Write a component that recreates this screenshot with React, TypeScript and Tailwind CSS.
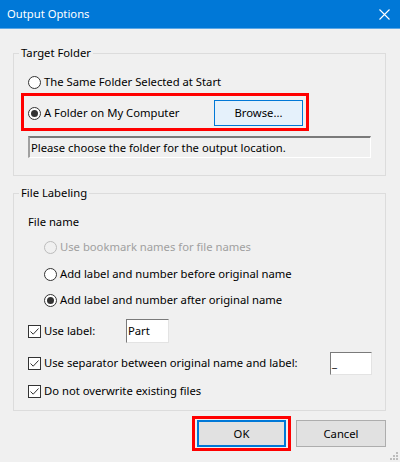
import React from "react";

function Radio({ checked, disabled }: { checked?: boolean; disabled?: boolean }) {
  return (
    <span
      className={
        "w-[13px] h-[13px] rounded-full border flex items-center justify-center shrink-0 " +
        (disabled ? "border-[#bcbcbc] bg-[#f0f0f0]" : "border-[#333333] bg-white")
      }
    >
      {checked && <span className="w-[7px] h-[7px] rounded-full bg-[#333333]" />}
    </span>
  );
}

function Check() {
  return (
    <span className="w-[13px] h-[13px] border border-[#333333] bg-white flex items-center justify-center shrink-0">
      <svg width="11" height="11" viewBox="0 0 11 11">
        <path d="M1.5 5.5 L4.2 8.2 L9.5 2.5" fill="none" stroke="#333333" strokeWidth="1" />
      </svg>
    </span>
  );
}

function RadioRow({ label, checked, disabled }: { label: string; checked?: boolean; disabled?: boolean }) {
  return (
    <div className="flex items-center h-[16px]">
      <Radio checked={checked} disabled={disabled} />
      <span className={"ml-[3px] " + (disabled ? "text-[#a0a0a0]" : "")}>{label}</span>
    </div>
  );
}

export default function App() {
  return (
    <div className="w-[400px] h-[462px] bg-[#f0f0f0] flex flex-col relative overflow-hidden text-[11.25px] leading-[16px] text-black font-['Segoe_UI','Noto_Sans',sans-serif]">
      {/* title bar */}
      <div className="h-[29px] bg-[#0078d7] border-b border-[#5aa7e6] flex items-center justify-between pl-[7px] pr-[10px] text-white shrink-0">
        <span>Output Options</span>
        <svg width="11" height="11" viewBox="0 0 11 11">
          <path d="M0.5 0.5 L10.5 10.5 M10.5 0.5 L0.5 10.5" stroke="#ffffff" strokeWidth="1.1" />
        </svg>
      </div>

      <div className="pl-[13px] pr-[14px]">
        {/* Target Folder */}
        <fieldset className="mt-[16px] border border-[#dcdcdc] pb-[17px]">
          <legend className="ml-[5px] px-[2px] leading-[16px]">Target Folder</legend>
          <div className="pt-[13px] pl-[14px]">
            <RadioRow label="The Same Folder Selected at Start" />
          </div>
          <div className="mt-[3px] ml-[7px] w-[288px] h-[38px] border-[3px] border-[#ff0000] flex items-center pl-[4px] pr-[3px] pt-[2px]">
            <Radio checked />
            <span className="ml-[3px]">A Folder on My Computer</span>
            <button className="ml-auto w-[89px] h-[26px] bg-[#e5f1fb] border border-[#0078d7] text-black">
              Browse...
            </button>
          </div>
          <div className="mt-[5px] ml-[14px] w-[343px] h-[22px] border-t-2 border-l-2 border-r border-b border-t-[#7a7a7a] border-l-[#a0a0a0] border-r-white border-b-white flex items-center pl-[1px]">
            Please choose the folder for the output location.
          </div>
        </fieldset>

        {/* File Labeling */}
        <fieldset className="mt-[9px] border border-[#dcdcdc] pb-[11px]">
          <legend className="ml-[5px] px-[2px] leading-[16px]">File Labeling</legend>
          <div className="pt-[13px] pl-[14px]">File name</div>
          <div className="pl-[30px] flex flex-col">
            <div className="mt-[9px]">
              <RadioRow label="Use bookmark names for file names" disabled />
            </div>
            <div className="mt-[11px]">
              <RadioRow label="Add label and number before original name" />
            </div>
            <div className="mt-[10px]">
              <RadioRow label="Add label and number after original name" checked />
            </div>
          </div>
          <div className="pl-[14px] flex flex-col">
            <div className="mt-[11px] h-[24px] flex items-center">
              <Check />
              <span className="ml-[3px] w-[82px]">Use label:</span>
              <div className="w-[43px] h-[24px] bg-white border border-t-[#7a7a7a] border-l-[#7a7a7a] border-r-[#e3e3e3] border-b-[#e3e3e3] flex items-center pl-[1px]">
                Part
              </div>
            </div>
            <div className="mt-[8px] h-[24px] flex items-center">
              <Check />
              <span className="ml-[3px]">Use separator between original name and label:</span>
              <div className="ml-auto mr-[13px] w-[42px] h-[23px] bg-white border border-t-[#7a7a7a] border-l-[#7a7a7a] border-r-[#e3e3e3] border-b-[#e3e3e3] flex items-center pl-[1px]">
                _
              </div>
            </div>
            <div className="mt-[8px] h-[16px] flex items-center">
              <Check />
              <span className="ml-[3px]">Do not overwrite existing files</span>
            </div>
          </div>
        </fieldset>

        {/* buttons */}
        <div className="mt-[5px] flex justify-end items-center gap-[5px]">
          <div className="w-[99px] h-[35px] border-[3px] border-[#ff0000] px-[2px] py-[1px]">
            <button className="w-full h-full bg-[#e1e1e1] border-2 border-[#0078d7] text-black">OK</button>
          </div>
          <button className="w-[90px] h-[27px] bg-[#e1e1e1] border border-[#adadad] text-black">Cancel</button>
        </div>
      </div>

      {/* size grip */}
      <svg className="absolute right-[2px] bottom-[2px]" width="8" height="8" viewBox="0 0 8 8">
        <rect x="6" y="0" width="2" height="2" fill="#bcbcbc" />
        <rect x="3" y="3" width="2" height="2" fill="#bcbcbc" />
        <rect x="6" y="3" width="2" height="2" fill="#bcbcbc" />
        <rect x="0" y="6" width="2" height="2" fill="#bcbcbc" />
        <rect x="3" y="6" width="2" height="2" fill="#bcbcbc" />
        <rect x="6" y="6" width="2" height="2" fill="#bcbcbc" />
      </svg>
    </div>
  );
}
